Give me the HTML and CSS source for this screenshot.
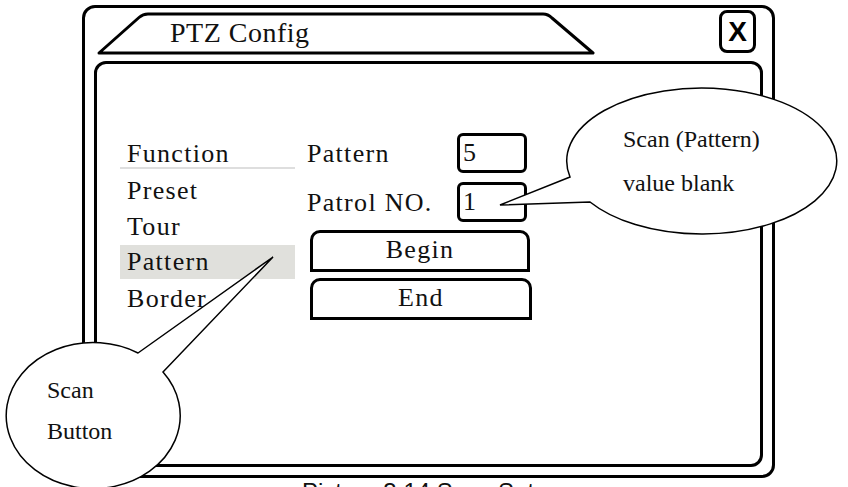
FILE: index.html
```html
<!DOCTYPE html>
<html lang="en">
<head>
    <meta charset="UTF-8">
    <title>PTZ Config</title>
    <link rel="stylesheet" href="styles.css">
</head>
<body>

<div class="figure">

    <div class="window">
        <div class="header">
            <svg class="tab" width="510" height="53" viewBox="0 0 510 53">
                <path d="M5,45 L45,9.5 Q49,6 54,6 L449,6 Q454,6 458,10 L499,45 Z" fill="none" stroke="#000" stroke-width="3" stroke-linejoin="round"/>
                <text x="76" y="34" class="tab-title">PTZ Config</text>
            </svg>
            <div class="close">X</div>
        </div>

        <div class="panel">
            <div class="menu">
                <div class="menu-head">Function</div>
                <div class="menu-item">Preset</div>
                <div class="menu-item">Tour</div>
                <div class="menu-item active">Pattern</div>
                <div class="menu-item">Border</div>
            </div>

            <div class="fields">
                <div class="field">
                    <span class="label">Pattern</span>
                    <span class="value">5</span>
                </div>
                <div class="field">
                    <span class="label">Patrol NO.</span>
                    <span class="value">1</span>
                </div>
                <div class="btn begin">Begin</div>
                <div class="btn end">End</div>
            </div>
        </div>
    </div>

    <div class="caption">Picture 3.14 Scan Setup</div>

    <!-- callouts drawn over the screen -->
    <svg class="callouts" width="848" height="487" viewBox="0 0 848 487">
        <path d="M138,353 L273,257 L163,372 A87,73 0 1 1 138,353 Z" fill="#fff" stroke="#000" stroke-width="1.5"/>
        <text x="47" y="398" class="note">Scan</text>
        <text x="47" y="439" class="note">Button</text>

        <path d="M590,202 L500,205 L570,177 A135,73 0 1 1 590,202 Z" fill="#fff" stroke="#000" stroke-width="1.5"/>
        <text x="623" y="147" class="note">Scan (Pattern)</text>
        <text x="623" y="191" class="note">value blank</text>
    </svg>

</div>

</body>
</html>
```

FILE: styles.css
```css
html, body {
    margin: 0;
    padding: 0;
    background: #fff;
}

body {
    font-family: 'Liberation Serif', 'Times New Roman', serif;
    color: #111;
}

.figure {
    position: relative;
    width: 848px;
    height: 487px;
    overflow: hidden;
}

.window {
    box-sizing: border-box;
    width: 693px;
    height: 473px;
    margin: 5px 0 0 82px;
    padding: 0 9px 8px 9px;
    border: 3px solid #000;
    border-radius: 13px;
    display: flex;
    flex-direction: column;
}

.header {
    height: 53px;
    display: flex;
    justify-content: space-between;
    align-items: flex-start;
}

.tab {
    display: block;
}

.tab-title {
    font-family: 'Liberation Serif', 'Times New Roman', serif;
    font-size: 28px;
    letter-spacing: 0.5px;
    fill: #111;
}

.close {
    box-sizing: border-box;
    width: 37px;
    height: 43px;
    margin: 2px 7px 0 0;
    border: 3px solid #000;
    border-radius: 8px;
    font-family: 'Liberation Sans', Arial, sans-serif;
    font-weight: bold;
    font-size: 28px;
    line-height: 37px;
    text-align: center;
    color: #000;
}

.panel {
    flex: 1;
    border: 3px solid #000;
    border-radius: 12px;
    padding: 69px 0 0 23px;
    display: flex;
    align-items: flex-start;
    gap: 12px;
    font-size: 26px;
    letter-spacing: 1.3px;
}

.menu {
    width: 175px;
    margin-top: 8px;
}

.menu-head {
    padding-left: 7px;
    line-height: 26px;
    border-bottom: 2px solid #dedede;
    margin-bottom: 4px;
}

.menu-item {
    padding-left: 7px;
    line-height: 36px;
}

.menu-item.active {
    background: #e0e0dc;
    line-height: 34px;
    margin-bottom: 2px;
}

.fields {
    display: flex;
    flex-direction: column;
}

.field {
    display: flex;
    align-items: flex-start;
    margin-bottom: 9px;
}

.label {
    width: 150px;
    padding-top: 3px;
    line-height: 36px;
    white-space: nowrap;
}

.value {
    box-sizing: border-box;
    width: 70px;
    height: 40px;
    padding-left: 3px;
    border: 3px solid #000;
    border-radius: 6px;
    line-height: 34px;
}

.btn {
    box-sizing: border-box;
    height: 42px;
    margin-left: 3px;
    border: 3px solid #000;
    border-radius: 10px 10px 0 0;
    line-height: 34px;
    text-align: center;
}

.begin {
    width: 220px;
    margin-top: -1px;
}

.end {
    width: 222px;
    margin-top: 6px;
}

.caption {
    padding-left: 302px;
    font-family: 'Liberation Sans', Arial, sans-serif;
    font-size: 24px;
    color: #111;
    white-space: nowrap;
}

.callouts {
    position: absolute;
    top: 0;
    left: 0;
    pointer-events: none;
}

.note {
    font-family: 'Liberation Serif', 'Times New Roman', serif;
    font-size: 24px;
    fill: #111;
}
```
